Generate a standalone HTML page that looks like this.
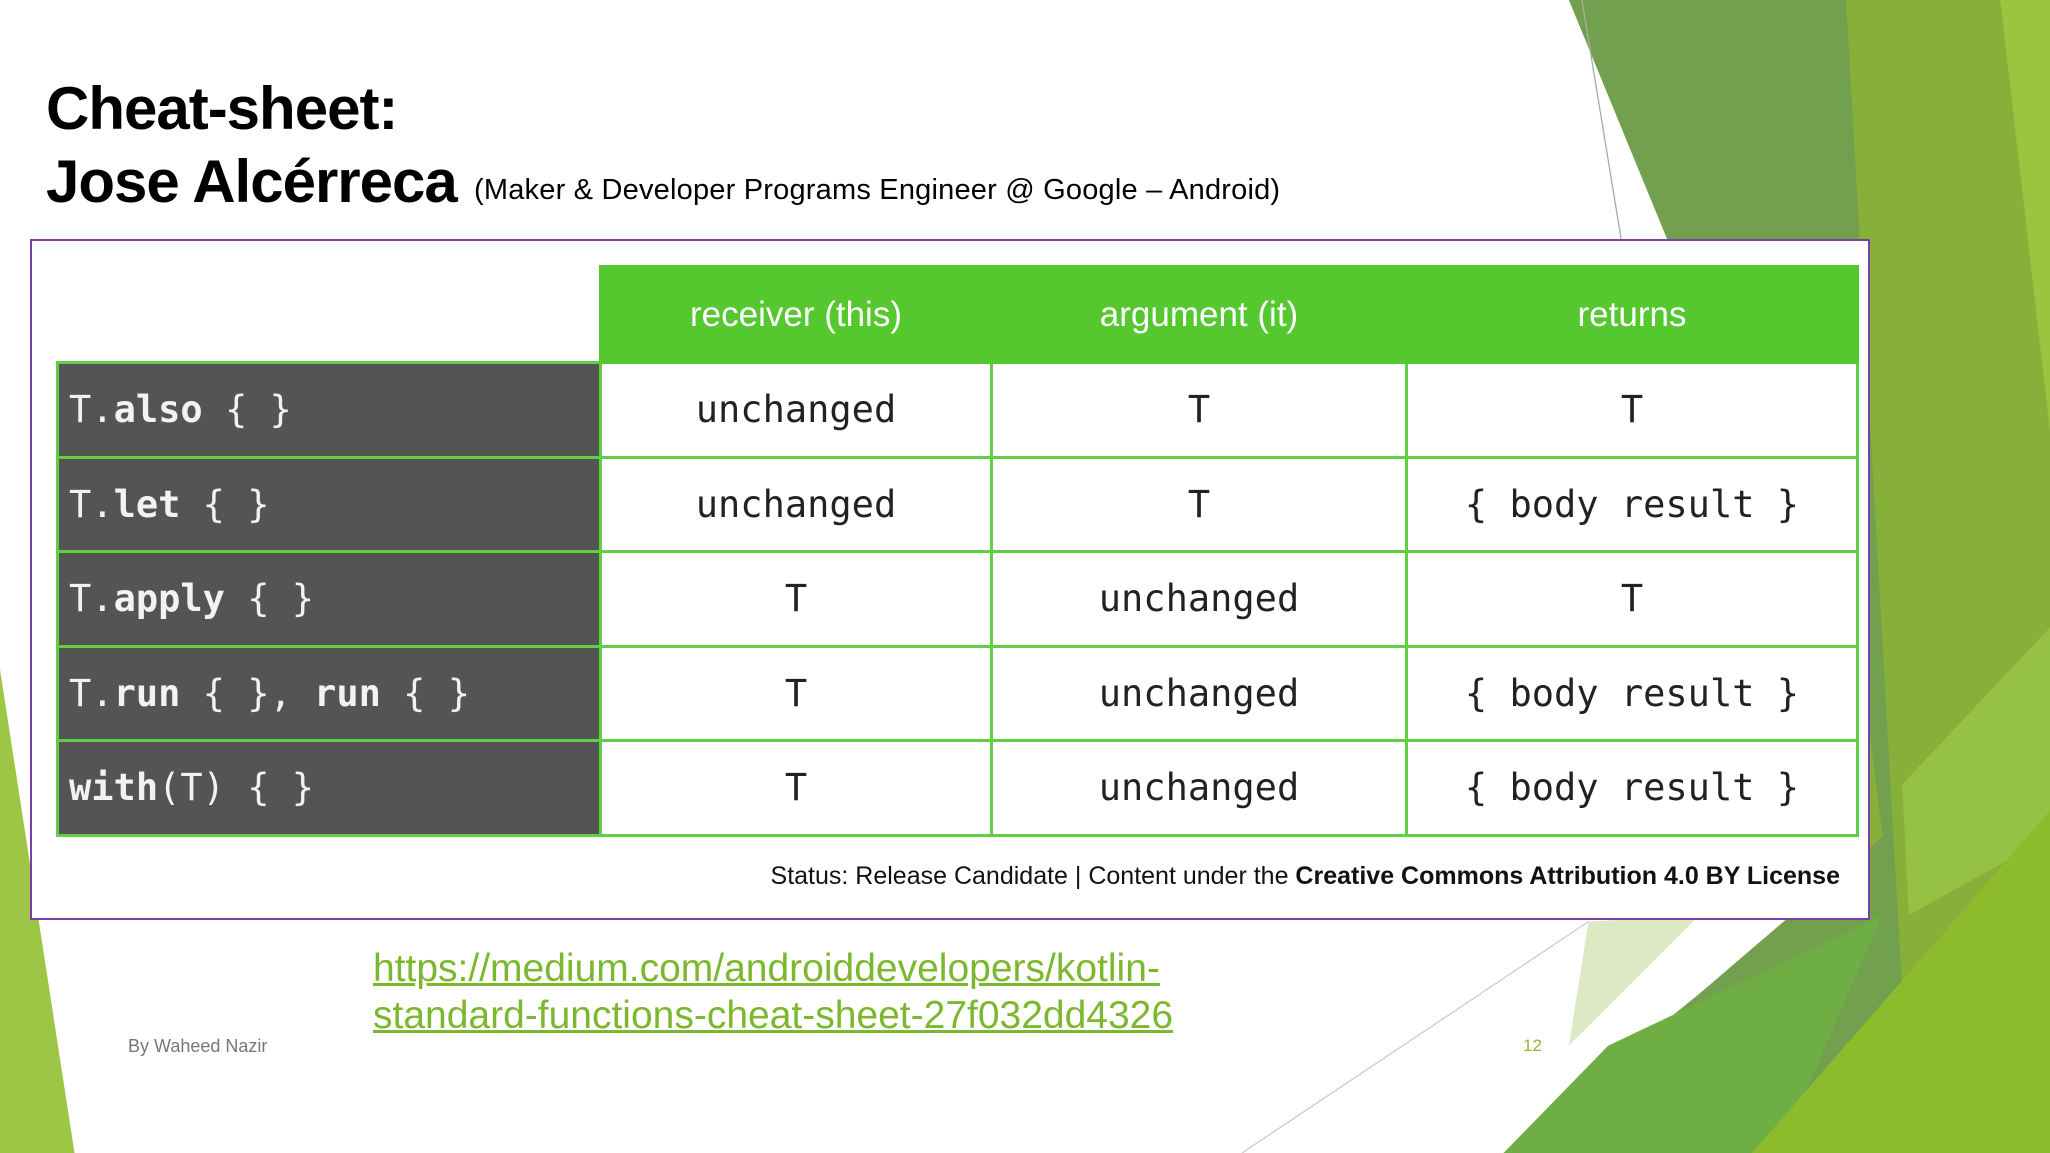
<!DOCTYPE html>
<html><head><meta charset="utf-8"><style>
*{margin:0;padding:0;box-sizing:border-box}
body{width:2050px;height:1153px;position:relative;overflow:hidden;background:#fff;font-family:"Liberation Sans",sans-serif}
.abs{position:absolute;white-space:nowrap}
.box{position:absolute;left:30px;top:239px;width:1840px;height:681px;background:#fff;border:2px solid #7a3fa0}
table{position:absolute;left:24px;top:24px;border-collapse:collapse;table-layout:fixed}
td{height:94.5px;border:3px solid #5fcf45;text-align:center;font-family:"DejaVu Sans Mono","Liberation Mono",monospace;font-size:37px;color:#222}
td.l{background:#545454;color:#f2f2f2;text-align:left;padding-left:10px;font-size:37px}
td.l b{font-weight:bold}
th{background:#55c72f;color:#fff;font-weight:normal;font-size:35px;height:96px;border:3px solid #55c72f;font-family:"Liberation Sans",sans-serif}
td.e{border:none;background:#fff}
</style></head><body>
<svg class="abs" style="left:0;top:0" width="2050" height="1153" viewBox="0 0 1568 882" preserveAspectRatio="none">
<polygon points="1400,0 1530,0 1568,250 1568,882 1400,882" fill="#86b03a"/>
<polygon points="1530,0 1568,0 1568,330" fill="#9ac53f"/>
<polygon points="1200,0 1412,0 1462,882 1150,882 1300,760 1440,640 1430,560" fill="#72a04e"/>
<polygon points="1455,600 1568,480 1568,640 1460,700" fill="#96c244"/>
<polygon points="1215,705 1300,700 1200,800" fill="#dce9c2"/>
<polygon points="1150,882 1230,800 1440,700 1360,882" fill="#6fae45"/>
<polygon points="1340,882 1568,620 1568,882" fill="#8cbc2c"/>
<polygon points="0,512 57,882 0,882" fill="#9dc646"/>
<line x1="1210" y1="0" x2="1240" y2="183" stroke="#aaa" stroke-width="1"/>
<line x1="1215" y1="705" x2="950" y2="882" stroke="#ccc" stroke-width="1"/>
</svg>
<div class="abs" style="left:46px;top:74px;font-size:60px;font-weight:bold;color:#000;letter-spacing:-1px">Cheat-sheet:</div>
<div class="abs" style="left:46px;top:147px;font-size:60px;font-weight:bold;color:#000;letter-spacing:-1px">Jose Alcérreca</div>
<div class="abs" style="left:474px;top:174px;font-size:29px;color:#000;letter-spacing:0.2px">(Maker &amp; Developer Programs Engineer @ Google – Android)</div>
<div class="box">
<table>
<colgroup><col style="width:543px"><col style="width:391px"><col style="width:415px"><col style="width:451px"></colgroup>
<tr><td class="e" style="height:96px"></td><th>receiver (this)</th><th>argument (it)</th><th>returns</th></tr>
<tr><td class="l">T.<b>also</b> { }</td><td>unchanged</td><td>T</td><td>T</td></tr>
<tr><td class="l">T.<b>let</b> { }</td><td>unchanged</td><td>T</td><td>{ body result }</td></tr>
<tr><td class="l">T.<b>apply</b> { }</td><td>T</td><td>unchanged</td><td>T</td></tr>
<tr><td class="l">T.<b>run</b> { }, <b>run</b> { }</td><td>T</td><td>unchanged</td><td>{ body result }</td></tr>
<tr><td class="l"><b>with</b>(T) { }</td><td>T</td><td>unchanged</td><td>{ body result }</td></tr>
</table>
<div class="abs" style="right:28px;top:621px;font-size:25px;color:#111">Status: Release Candidate | Content under the <b>Creative Commons Attribution 4.0 BY License</b></div>
</div>
<div class="abs" style="left:373px;top:945px;font-size:39px;line-height:47px;color:#7cb82f;text-decoration:underline">https://medium.com/androiddevelopers/kotlin-<br>standard-functions-cheat-sheet-27f032dd4326</div>
<div class="abs" style="left:128px;top:1036px;font-size:18px;color:#777">By Waheed Nazir</div>
<div class="abs" style="left:1523px;top:1036px;font-size:17px;color:#8cb92c">12</div>
</body></html>
